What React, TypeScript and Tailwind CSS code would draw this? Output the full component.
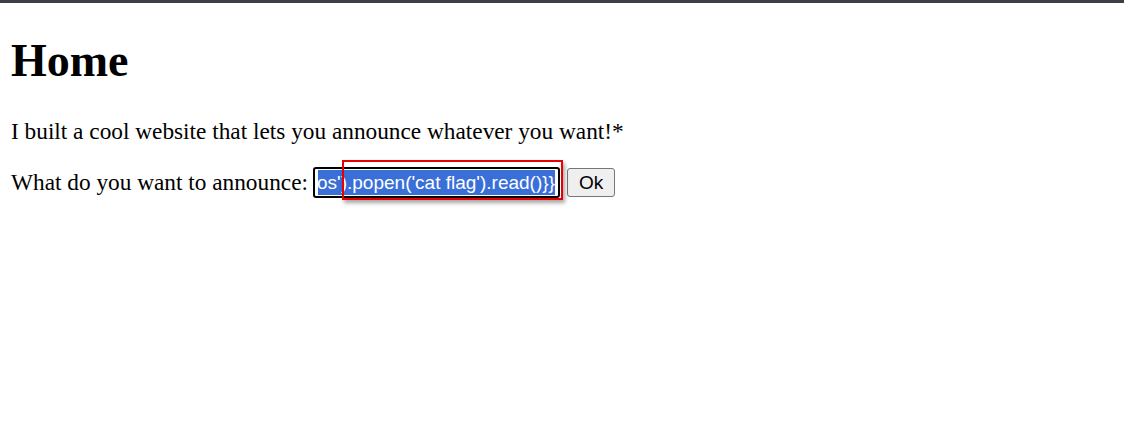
export default function App() {
  return (
    <div className="min-h-screen bg-white text-black">
      <div className="h-[3px] bg-[#3d3f46]" />
      <div className="px-[11px] font-['Liberation_Serif',serif] text-[23.3px] leading-[1.15]">
        <h1 className="mt-[32px] text-[46px] font-bold leading-[1.15]">Home</h1>
        <p className="mt-[30px]">I built a cool website that lets you announce whatever you want!*</p>
        <div className="mt-[22px] flex items-center">
          <span>What do you want to announce:</span>
          <div className="relative ml-[5px]">
            <div className="flex h-[31px] w-[247px] items-center overflow-hidden rounded-[3px] border-2 border-black px-[3px]">
              <div className="flex h-[25px] w-full justify-end overflow-hidden">
                <span className="whitespace-nowrap bg-[#3a6fd8] font-['Liberation_Sans',sans-serif] text-[19px] leading-[25px] text-white">
                  {"{{request.application.__globals__.__builtins__.__import__('os').popen('cat flag').read()}}"}
                </span>
              </div>
            </div>
            <div className="pointer-events-none absolute right-[-3px] top-[-7px] h-[40px] w-[221px] border-2 border-[#e80000] shadow-[2px_3px_4px_rgba(0,0,0,0.35)]" />
          </div>
          <button className="ml-[7px] h-[29px] rounded-[3px] border border-[#767676] bg-[#efefef] px-[11px] font-['Liberation_Sans',sans-serif] text-[19px] leading-none">
            Ok
          </button>
        </div>
      </div>
    </div>
  );
}
